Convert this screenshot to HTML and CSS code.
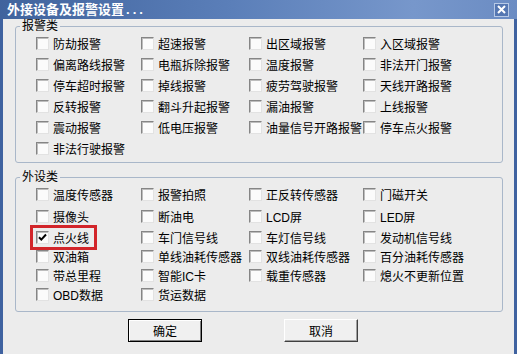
FILE: index.html
```html
<!DOCTYPE html>
<html lang="zh-CN">

<head>
    <meta charset="UTF-8">
    <meta name="viewport" content="width=device-width, initial-scale=1.0">
    <title>外接设备及报警设置</title>
    <link rel="stylesheet" href="styles.css">
</head>

<body>
    <div class="window">
        <div class="titlebar">
            <span class="title">外接设备及报警设置<span class="dots">...</span></span>
            <span class="close">
                <svg width="9" height="9" viewBox="0 0 9 9"><path d="M1 1L8 8M8 1L1 8" stroke="#fff" stroke-width="2"/></svg>
            </span>
        </div>
        <div class="body">
            <!-- 报警类 -->
            <fieldset class="group alarm">
                <legend>报警类</legend>
                <div class="grid">
                    <label class="item"><span class="box"></span>防劫报警</label>
                    <label class="item"><span class="box"></span>超速报警</label>
                    <label class="item"><span class="box"></span>出区域报警</label>
                    <label class="item"><span class="box"></span>入区域报警</label>
                    <label class="item"><span class="box"></span>偏离路线报警</label>
                    <label class="item"><span class="box"></span>电瓶拆除报警</label>
                    <label class="item"><span class="box"></span>温度报警</label>
                    <label class="item"><span class="box"></span>非法开门报警</label>
                    <label class="item"><span class="box"></span>停车超时报警</label>
                    <label class="item"><span class="box"></span>掉线报警</label>
                    <label class="item"><span class="box"></span>疲劳驾驶报警</label>
                    <label class="item"><span class="box"></span>天线开路报警</label>
                    <label class="item"><span class="box"></span>反转报警</label>
                    <label class="item"><span class="box"></span>翻斗升起报警</label>
                    <label class="item"><span class="box"></span>漏油报警</label>
                    <label class="item"><span class="box"></span>上线报警</label>
                    <label class="item"><span class="box"></span>震动报警</label>
                    <label class="item"><span class="box"></span>低电压报警</label>
                    <label class="item"><span class="box"></span>油量信号开路报警</label>
                    <label class="item"><span class="box"></span>停车点火报警</label>
                    <label class="item"><span class="box"></span>非法行驶报警</label>
                </div>
            </fieldset>

            <!-- 外设类 -->
            <fieldset class="group device">
                <legend>外设类</legend>
                <div class="grid">
                    <label class="item"><span class="box"></span>温度传感器</label>
                    <label class="item"><span class="box"></span>报警拍照</label>
                    <label class="item"><span class="box"></span>正反转传感器</label>
                    <label class="item"><span class="box"></span>门磁开关</label>
                    <label class="item"><span class="box"></span>摄像头</label>
                    <label class="item"><span class="box"></span>断油电</label>
                    <label class="item"><span class="box"></span>LCD屏</label>
                    <label class="item"><span class="box"></span>LED屏</label>
                    <label class="item marked"><span class="box checked">
                        <svg width="9" height="9" viewBox="0 0 9 9"><path d="M1 4.2L3.3 6.6L8 1.5" fill="none" stroke="#000" stroke-width="2"/></svg>
                    </span>点火线</label>
                    <label class="item"><span class="box"></span>车门信号线</label>
                    <label class="item"><span class="box"></span>车灯信号线</label>
                    <label class="item"><span class="box"></span>发动机信号线</label>
                    <label class="item"><span class="box"></span>双油箱</label>
                    <label class="item"><span class="box"></span>单线油耗传感器</label>
                    <label class="item"><span class="box"></span>双线油耗传感器</label>
                    <label class="item"><span class="box"></span>百分油耗传感器</label>
                    <label class="item"><span class="box"></span>带总里程</label>
                    <label class="item"><span class="box"></span>智能IC卡</label>
                    <label class="item"><span class="box"></span>载重传感器</label>
                    <label class="item"><span class="box"></span>熄火不更新位置</label>
                    <label class="item"><span class="box"></span>OBD数据</label>
                    <label class="item"><span class="box"></span>货运数据</label>
                </div>
            </fieldset>

            <div class="actions">
                <button class="btn default">确定</button>
                <button class="btn">取消</button>
            </div>
        </div>
    </div>
</body>

</html>
```

FILE: styles.css
```css
body {
    margin: 0;
    padding: 0;
    font-family: "Liberation Sans", "Noto Sans CJK SC", sans-serif;
    font-size: 12px;
    color: #000;
    background-color: #ececec;
}

.window {
    width: 517px;
    height: 354px;
    overflow: hidden;
    background-color: #ececec;
}

.titlebar {
    display: flex;
    align-items: center;
    height: 19px;
    background: linear-gradient(to right, #40639d, #5b7fb9 45%, #7797cb 80%, #6b8cc3);
}

.title {
    padding-left: 7px;
    color: #fff;
    font-weight: bold;
    font-size: 13px;
    line-height: 19px;
}

.title .dots {
    margin-left: 2px;
    letter-spacing: 3px;
}

.close {
    display: flex;
    align-items: center;
    justify-content: center;
    margin-left: auto;
    margin-right: 8px;
    width: 15px;
    height: 14px;
    box-sizing: border-box;
    border: 1px solid #b7c9e6;
    background-color: #5577b2;
}

.body {
    height: 335px;
    box-sizing: border-box;
    padding-left: 12px;
    border-left: 3px solid #3f62a0;
    border-right: 3px solid #3f62a0;
}

.group {
    width: 488px;
    box-sizing: border-box;
    margin: 0;
    padding: 0 0 3px 0;
    border: 1px solid #a9b7c9;
    border-radius: 3px;
    min-inline-size: 0;
}

.group legend {
    margin-left: 4px;
    padding: 0 2px;
    font-size: 12px;
    line-height: 14px;
}

.grid {
    display: grid;
    grid-template-columns: 105px 108px 114px 1fr;
    grid-auto-rows: 21px;
    margin-left: 20px;
}

.device {
    margin-top: 7px;
    padding-bottom: 7px;
}

.device .grid {
    grid-template-rows: 21px 22px 20px 19px 19px 19px;
}

.item {
    position: relative;
    display: flex;
    align-items: center;
    white-space: nowrap;
}

.box {
    display: flex;
    align-items: center;
    justify-content: center;
    width: 13px;
    height: 13px;
    box-sizing: border-box;
    margin-right: 4px;
    border: 1px solid;
    border-color: #858585 #e2e2e2 #e2e2e2 #858585;
    box-shadow: inset 1px 1px 0 #bdbdbd;
    background-color: #fbfbfb;
    flex-shrink: 0;
}

/* red marker round 点火线 */
.marked::after {
    content: "";
    position: absolute;
    left: -6px;
    top: -2px;
    width: 67px;
    height: 25px;
    box-sizing: border-box;
    border: 3px solid #d2252a;
}

.actions {
    display: flex;
    gap: 82px;
    margin-top: 7px;
    padding-left: 113px;
}

.btn {
    width: 74px;
    height: 23px;
    padding: 0;
    font-family: "Liberation Sans", "Noto Sans CJK SC", sans-serif;
    font-size: 12px;
    color: #000;
    background-color: #f0f0f0;
    border: 1px solid;
    border-color: #fff #404040 #404040 #fff;
    box-shadow: inset -1px -1px 0 #a0a0a0;
}

.btn.default {
    border-color: #000;
    box-shadow: inset 1px 1px 0 #fff, inset -1px -1px 0 #808080;
}
```
